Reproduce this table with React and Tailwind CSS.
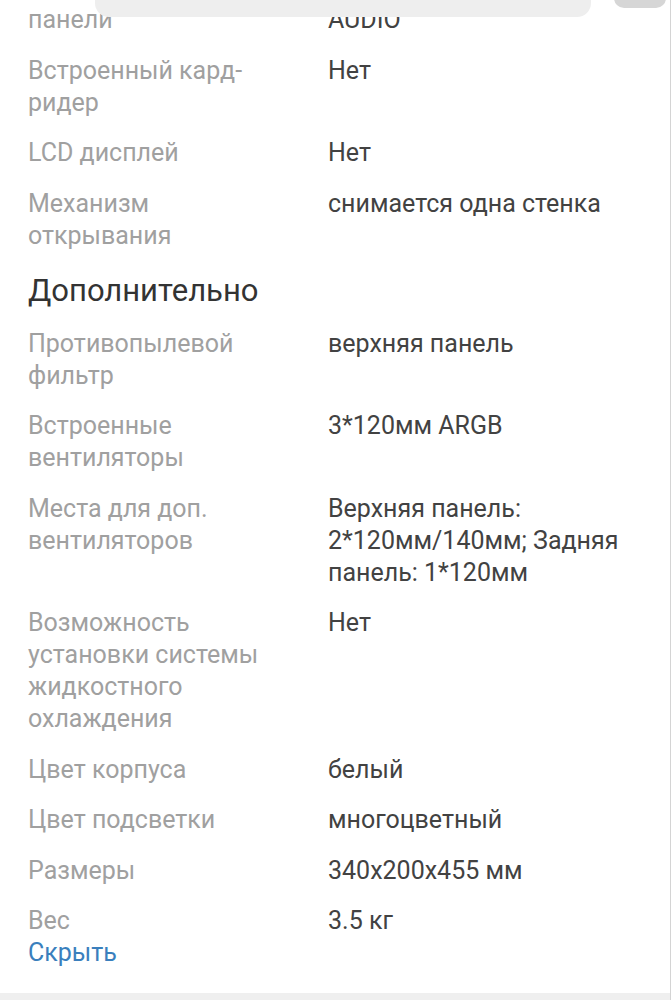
const rowsTop = [
  { label: "Разъемы на лицевой панели", value: "USB 3.0 x1, USB 2.0 x2, AUDIO" },
  { label: "Встроенный кард-ридер", value: "Нет" },
  { label: "LCD дисплей", value: "Нет" },
  { label: "Механизм открывания", value: "снимается одна стенка" },
];

const rowsExtra = [
  { label: "Противопылевой фильтр", value: "верхняя панель" },
  { label: "Встроенные вентиляторы", value: "3*120мм ARGB" },
  { label: "Места для доп. вентиляторов", value: "Верхняя панель: 2*120мм/140мм; Задняя панель: 1*120мм" },
  { label: "Возможность установки системы жидкостного охлаждения", value: "Нет" },
  { label: "Цвет корпуса", value: "белый" },
  { label: "Цвет подсветки", value: "многоцветный" },
  { label: "Размеры", value: "340x200x455 мм" },
  { label: "Вес", value: "3.5 кг" },
];

function SpecRow({ label, value }) {
  return (
    <div className="grid grid-cols-[255px_1fr] gap-x-[45px]">
      <div className="text-[#a0a0a0]">{label}</div>
      <div className="text-[#424242]">{value}</div>
    </div>
  );
}

export default function App() {
  return (
    <div className="relative h-[1000px] w-[671px] overflow-hidden bg-white font-['Roboto',sans-serif] text-[25px] leading-[32px]">
      {/* floating bars at the top */}
      <div className="absolute left-[95px] top-[-20px] z-10 h-[37px] w-[496px] rounded-[14px] bg-[#eeeeee]" />
      <div className="absolute left-[614px] top-[-20px] z-10 h-[28px] w-[52px] rounded-[10px] bg-[#d6d6d6]" />

      <div className="flex h-full flex-col border-r border-[#d4d4d4]">
        <div className="-mt-[28px] flex flex-col gap-[18.5px] pl-[28px] pr-[24px]">
          {rowsTop.map((r) => (
            <SpecRow key={r.label} label={r.label} value={r.value} />
          ))}
          <h3 className="mt-[3px] text-[31px] leading-[36px] text-[#333333]">Дополнительно</h3>
          {rowsExtra.map((r) => (
            <SpecRow key={r.label} label={r.label} value={r.value} />
          ))}
        </div>
        <div className="pl-[28px]">
          <button className="text-[#3a7fbd]">Скрыть</button>
        </div>
        <div className="flex-1" />
        <div className="h-[7px] bg-[#efefef]" />
      </div>
    </div>
  );
}
